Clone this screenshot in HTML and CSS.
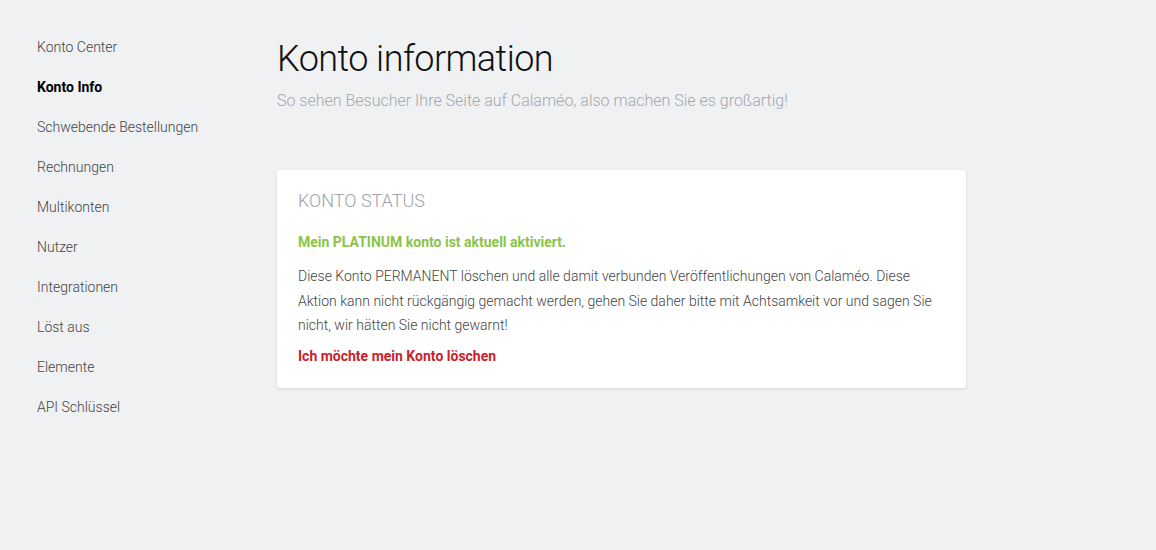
FILE: index.html
```html
<!DOCTYPE html>
<html lang="de">
<head>
<meta charset="utf-8">
<title>Konto information</title>
<link rel="stylesheet" href="styles.css">
</head>
<body>
<div class="layout">
  <nav class="sidebar">
    <a class="nav-item" href="#">Konto Center</a>
    <a class="nav-item active" href="#">Konto Info</a>
    <a class="nav-item" href="#">Schwebende Bestellungen</a>
    <a class="nav-item" href="#">Rechnungen</a>
    <a class="nav-item" href="#">Multikonten</a>
    <a class="nav-item" href="#">Nutzer</a>
    <a class="nav-item" href="#">Integrationen</a>
    <a class="nav-item" href="#">Löst aus</a>
    <a class="nav-item" href="#">Elemente</a>
    <a class="nav-item" href="#">API Schlüssel</a>
  </nav>
  <main class="content">
    <h1 class="title">Konto information</h1>
    <p class="subtitle">So sehen Besucher Ihre Seite auf Calaméo, also machen Sie es großartig!</p>
    <section class="card">
      <h2 class="card-title">KONTO STATUS</h2>
      <p class="status">Mein PLATINUM konto ist aktuell aktiviert.</p>
      <p class="desc">Diese Konto PERMANENT löschen und alle damit verbunden Veröffentlichungen von Calaméo. Diese Aktion kann nicht rückgängig gemacht werden, gehen Sie daher bitte mit Achtsamkeit vor und sagen Sie nicht, wir hätten Sie nicht gewarnt!</p>
      <a class="delete" href="#">Ich möchte mein Konto löschen</a>
    </section>
  </main>
</div>
</body>
</html>
```
FILE: styles.css
```css
html, body {
  margin: 0;
  padding: 0;
  background: #f0f1f3;
  font-family: Roboto, "Liberation Sans", sans-serif;
}
.layout {
  display: flex;
  padding-left: 37px;
}
.sidebar {
  width: 240px;
  flex: none;
  display: flex;
  flex-direction: column;
  padding-top: 27px;
}
.nav-item {
  display: block;
  height: 40px;
  line-height: 40px;
  font-size: 14px;
  font-weight: 300;
  color: #444;
  text-decoration: none;
}
.nav-item.active {
  font-weight: 700;
  color: #000;
}
.content {
  flex: none;
  width: 689px;
  padding-top: 37px;
}
.title {
  margin: 0;
  font-size: 36px;
  font-weight: 300;
  line-height: 44px;
  color: #111;
  letter-spacing: -0.55px;
}
.subtitle {
  margin: 8px 0 0;
  font-size: 16px;
  font-weight: 300;
  line-height: 24px;
  color: #a3a7ab;
}
.card {
  margin-top: 57px;
  background: #fff;
  border-radius: 3px;
  box-shadow: 0 1px 3px rgba(0,0,0,0.12);
  padding: 19px 20px 22px 21px;
}
.card-title {
  margin: 0;
  font-size: 18px;
  font-weight: 300;
  line-height: 24px;
  color: #9ea2a7;
}
.status {
  margin: 19px 0 0;
  font-size: 14px;
  font-weight: 700;
  line-height: 20px;
  color: #8bc34a;
}
.desc {
  margin: 12px 0 0;
  font-size: 14px;
  font-weight: 300;
  line-height: 24.5px;
  color: #444;
}
.delete {
  display: block;
  margin-top: 8px;
  font-size: 14px;
  font-weight: 700;
  line-height: 20px;
  color: #c9222c;
  text-decoration: none;
}
```
